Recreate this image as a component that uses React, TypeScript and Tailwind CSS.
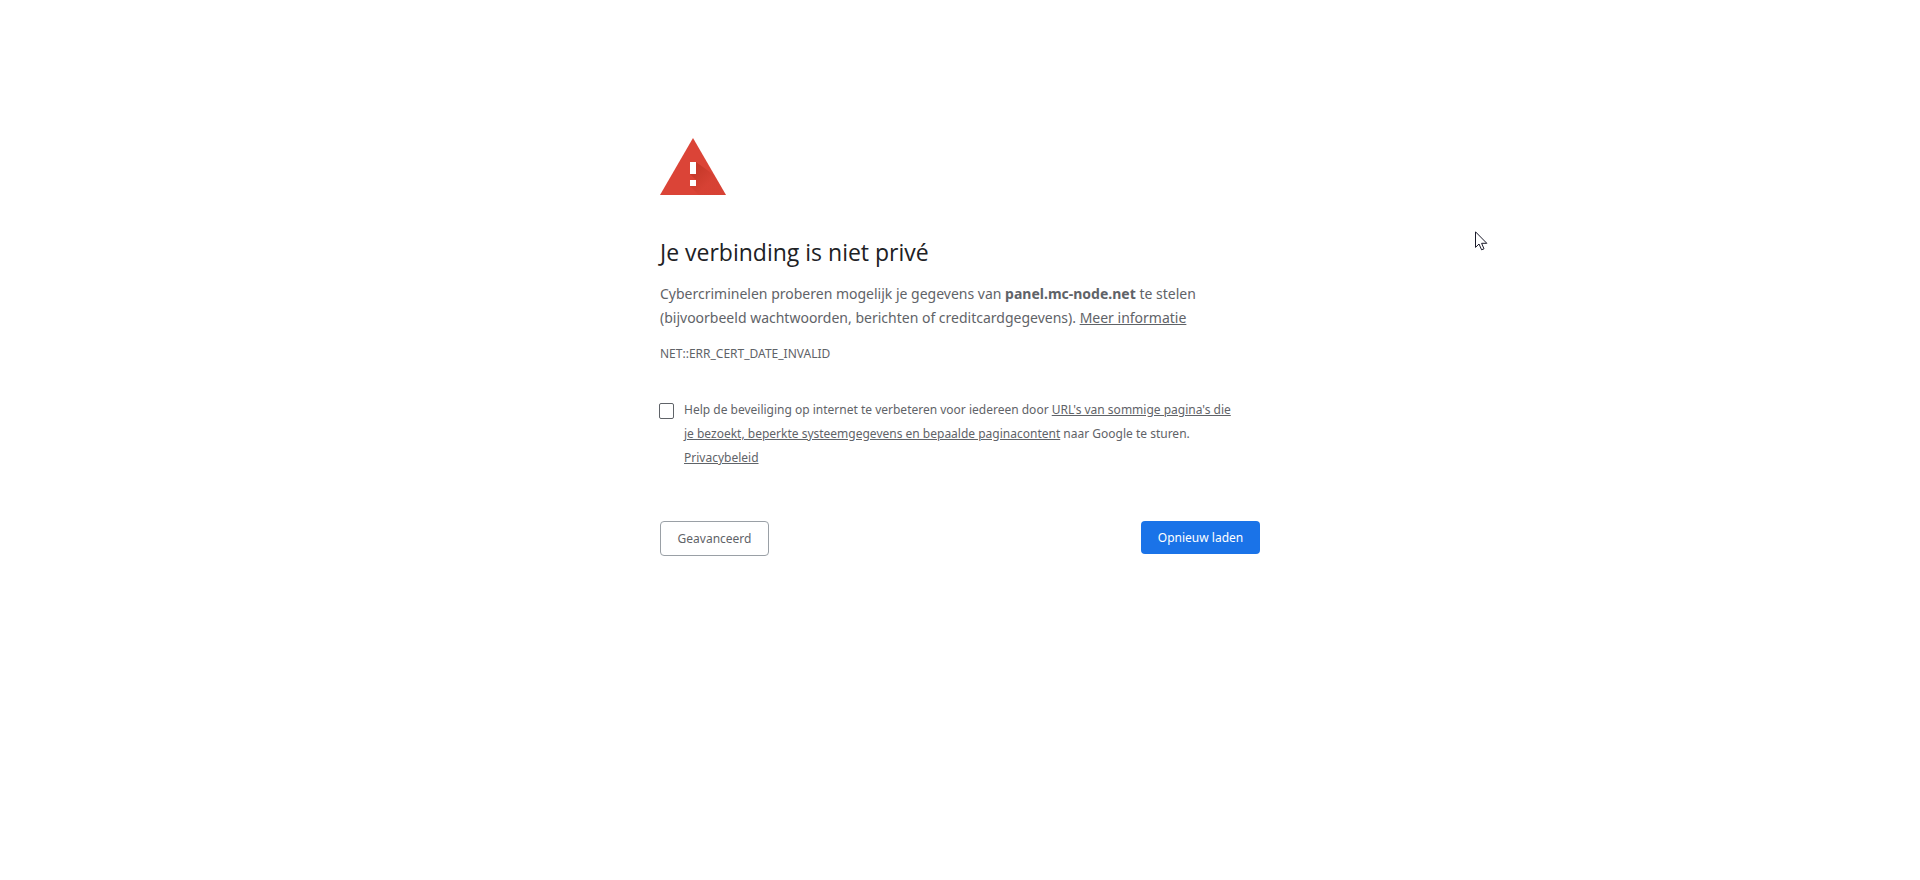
function WarningIcon() {
  return (
    <svg className="block h-[57px] w-[66px]" viewBox="0 0 66 57" role="img" aria-label="Waarschuwing">
      <defs>
        <linearGradient id="shade" gradientUnits="userSpaceOnUse" x1="34" y1="32" x2="48" y2="46">
          <stop offset="0" stopColor="#a52714" stopOpacity="0.4" />
          <stop offset="1" stopColor="#a52714" stopOpacity="0.08" />
        </linearGradient>
      </defs>
      <path d="M33 0 66 57H0Z" fill="#db4437" />
      <path d="M36 24 54 37 66 57H39L30 48 36 42 30 36Z" fill="url(#shade)" />
      <path d="M30 24h6v12h-6zM30 42h6v6h-6z" fill="#fff" />
    </svg>
  );
}

function Cursor() {
  return (
    <svg className="pointer-events-none absolute left-[1475px] top-[231px] h-[20px] w-[13px]" viewBox="0 0 13 20" aria-hidden="true">
      <path d="M.5 .8V16.4L4 13 6.6 18.8 9 17.8 6.6 12.3H11.8Z" fill="#fff" stroke="#1a1a2a" strokeWidth="1" />
    </svg>
  );
}

const link = "text-[#5f6368] underline underline-offset-1";

export default function App() {
  return (
    <div className="relative min-h-screen bg-white px-6 pt-[138px] font-['Noto_Sans','Open_Sans',sans-serif] text-[#5f6368]">
      <main className="mx-auto max-w-[600px]">
        <WarningIcon />
        <h1 className="mt-[41px] font-['Open_Sans','Noto_Sans',sans-serif] text-[23px] leading-8 text-[#202124]">Je verbinding is niet privé</h1>
        <p className="mt-[14px] text-[14px] leading-6">
          Cybercriminelen proberen mogelijk je gegevens van <strong className="font-bold">panel.mc-node.net</strong> te stelen
          <br />
          (bijvoorbeeld wachtwoorden, berichten of creditcardgegevens).{" "}
          <a href="#meer" className={link}>Meer informatie</a>
        </p>
        <p className="mt-3 text-[12px] leading-6">NET::ERR_CERT_DATE_INVALID</p>
        <div className="mt-8 flex gap-[10px]">
          <input
            id="opt-in"
            type="checkbox"
            className="-ml-px mt-[5px] h-4 w-[15px] shrink-0 appearance-none rounded-[2px] border border-[#5f6368] bg-white checked:bg-[#1a73e8]"
          />
          <label htmlFor="opt-in" className="text-[12px] leading-6">
            Help de beveiliging op internet te verbeteren voor iedereen door{" "}
            <a href="#urls" className={link}>
              URL's van sommige pagina's die
              <br />
              je bezoekt, beperkte systeemgegevens en bepaalde paginacontent
            </a>{" "}
            naar Google te sturen.
            <br />
            <a href="#privacy" className={link}>Privacybeleid</a>
          </label>
        </div>
        <div className="mt-[51px] flex items-start justify-between text-[12px]">
          <button type="button" className="h-[35px] w-[109px] rounded-[4px] border border-[#9aa0a6] bg-white">
            Geavanceerd
          </button>
          <button type="button" className="h-[33px] w-[119px] rounded-[4px] bg-[#1a73e8] text-white">
            Opnieuw laden
          </button>
        </div>
      </main>
      <Cursor />
    </div>
  );
}
